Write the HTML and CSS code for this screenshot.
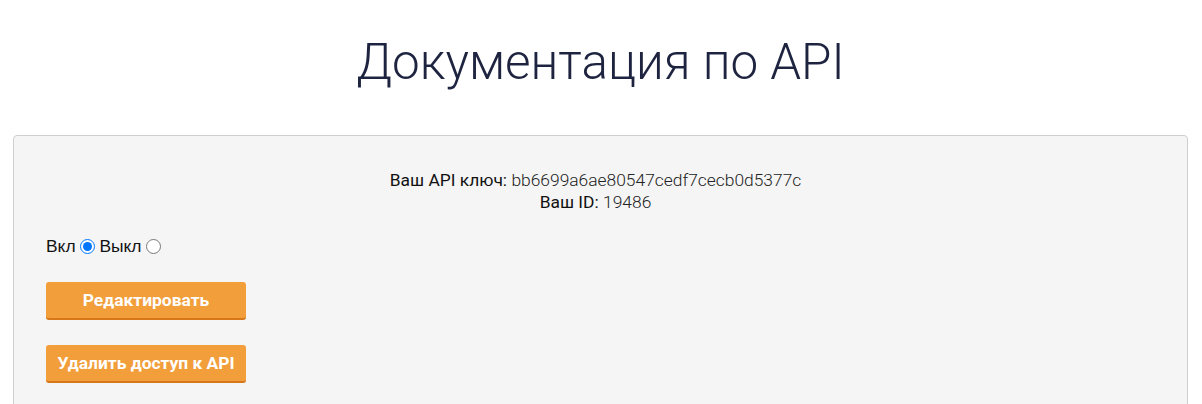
FILE: index.html
```html
<!DOCTYPE html>
<html lang="ru">
<head>
<meta charset="utf-8">
<title>Документация по API</title>
<link rel="stylesheet" href="styles.css">
</head>
<body>
<div class="page">
  <h1 class="title">Документация по API</h1>
  <div class="panel">
    <div class="info">
      <div><span class="label">Ваш API ключ:</span> <span class="value">bb6699a6ae80547cedf7cecb0d5377c</span></div>
      <div><span class="label">Ваш ID:</span> <span class="value">19486</span></div>
    </div>
    <div class="switch">
      <label class="opt">Вкл <input type="radio" name="api" checked></label>
      <label class="opt">Выкл <input type="radio" name="api"></label>
    </div>
    <div class="actions">
      <button class="btn">Редактировать</button>
      <button class="btn">Удалить доступ к API</button>
    </div>
  </div>
</div>
</body>
</html>
```

FILE: styles.css
```css
html, body {
  margin: 0;
  padding: 0;
  background: #fff;
}
body {
  font-family: Roboto, "Noto Sans", sans-serif;
  color: #222;
}
.page {
  padding: 0 14px 0 13px;
}
.title {
  margin: 0;
  padding: 30px 0 41px;
  text-align: center;
  font-weight: 300;
  font-size: 49.4px;
  line-height: 64px;
  color: #1e2440;
}
.panel {
  border: 1px solid #cfcfcf;
  border-radius: 4px;
  background: #f5f5f5;
  padding: 33px 42px 20px 32px;
  min-height: 300px;
}
.info {
  text-align: center;
  font-size: 17.4px;
  line-height: 22px;
}
.label {
  color: #111;
}
.value {
  font-weight: 300;
  color: #222;
}
.switch {
  margin-top: 23px;
  font-family: "Liberation Sans", Arial, sans-serif;
  font-size: 17.4px;
  color: #111;
  display: flex;
  gap: 4px;
}
.opt input {
  margin: 0;
  width: 15px;
  height: 15px;
  vertical-align: -2px;
}
.actions {
  margin-top: 25px;
  display: flex;
  flex-direction: column;
  align-items: flex-start;
  gap: 25px;
}
.btn {
  width: 200px;
  height: 38px;
  border: 0;
  border-bottom: 2px solid #d8761a;
  border-radius: 3px;
  background: #f19e3b;
  color: #fff;
  font-family: Roboto, sans-serif;
  font-weight: 700;
  font-size: 17.4px;
  padding: 0;
}
```
